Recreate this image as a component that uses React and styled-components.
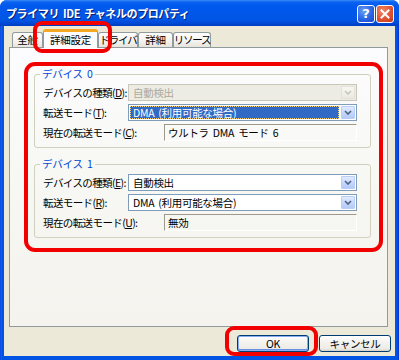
import React from 'react';
import styled, { createGlobalStyle } from 'styled-components';

const FONT = `"Noto Sans CJK JP", "Noto Sans", sans-serif`;

const Global = createGlobalStyle`
  html, body { margin: 0; padding: 0; background: #fff; }
  body { font-family: ${FONT}; }
  * { box-sizing: border-box; }
`;

const Window = styled.div`
  position: relative;
  width: 399px;
  height: 360px;
  display: flex;
  flex-direction: column;
  background: linear-gradient(to right, #0831d9 0, #166aee 1px, #0054e3 2px, #0054e3 397px, #0831d9 399px);
  border-radius: 7px 7px 0 0;
`;

const TitleBar = styled.div`
  height: 26px;
  flex: none;
  display: flex;
  align-items: center;
  justify-content: space-between;
  padding: 0 5px 0 6px;
  border-radius: 7px 7px 0 0;
  background: linear-gradient(to bottom, #3b8cf5 0, #0a63f0 2px, #0058ee 6px, #0157e8 14px, #0055e5 20px, #0046d0 24px, #003bc0 26px);
`;

const Title = styled.div`
  color: #fff;
  font-family: ${FONT};
  font-weight: bold;
  font-size: 11px;
  letter-spacing: -0.4px;
  word-spacing: 2px;
  text-shadow: 1px 1px 0 #0a1e78;
  white-space: nowrap;
`;

const CaptionButtons = styled.div`
  display: flex;
  gap: 1px;
  padding-top: 1px;
`;

const CaptionButton = styled.div`
  width: 18px;
  height: 18px;
  border: 1px solid #fff;
  border-radius: 3px;
  display: flex;
  align-items: center;
  justify-content: center;
  color: #fff;
  font-family: "DejaVu Sans", sans-serif;
  font-weight: bold;
  font-size: 13px;
  background: ${(p) =>
    p.$kind === 'close'
      ? 'radial-gradient(circle at 35% 30%, #f0886a 0, #e0532f 55%, #c2391a 100%)'
      : 'radial-gradient(circle at 35% 30%, #6a9cf5 0, #2a66e4 55%, #1848c8 100%)'};
`;

const Body = styled.div`
  flex: 1;
  margin: 0 4px 4px 4px;
  background: #ece9d8;
  display: flex;
  flex-direction: column;
  padding: 3px 4px 0 5px;
`;

const TabRow = styled.div`
  height: 18px;
  display: flex;
  align-items: flex-end;
  padding-left: 3px;
  position: relative;
  z-index: 1;
`;

const Tab = styled.div`
  width: ${(p) => p.$w}px;
  height: ${(p) => (p.$active ? 19 : 15)}px;
  margin-bottom: ${(p) => (p.$active ? -1 : 0)}px;
  border: 1px solid #919b9c;
  border-bottom: none;
  border-top: ${(p) => (p.$active ? '3px solid #f5a623' : '1px solid #919b9c')};
  border-radius: 3px 3px 0 0;
  background: ${(p) =>
    p.$active ? '#fcfcfe' : 'linear-gradient(to bottom, #fff 0, #f3f2ee 60%, #e6e4dc 100%)'};
  display: flex;
  align-items: ${(p) => (p.$active ? 'flex-start' : 'center')};
  justify-content: center;
  font-size: 10.5px;
  line-height: 12px;
  padding-top: ${(p) => (p.$active ? 2 : 0)}px;
  color: #000;
  white-space: nowrap;
  letter-spacing: ${(p) => (p.$tight ? -1.2 : -0.3)}px;
`;

const Panel = styled.div`
  height: 280px;
  margin-right: 3px;
  border: 1px solid #919b9c;
  background: linear-gradient(to bottom, #fcfcfe 0, #f7f7f3 50%, #f4f3ee 100%);
  padding: 20px 16px 0 24px;
  display: flex;
  flex-direction: column;
  gap: 10px;
`;

const Group = styled.fieldset`
  margin: 0;
  min-width: 0;
  border: 1px solid #d0d0bf;
  border-radius: 3px;
  padding: 4px 13px 6px 8px;
`;

const Legend = styled.legend`
  padding: 0 2px;
  margin-left: -3px;
  color: #0046d5;
  font-size: 10.5px;
  line-height: 12px;
  letter-spacing: -0.2px;
  word-spacing: 2px;
`;

const Row = styled.div`
  display: flex;
  align-items: center;
  height: 17px;
  margin-bottom: ${(p) => (p.$last ? 0 : 3)}px;
`;

const Label = styled.div`
  width: ${(p) => p.$w}px;
  flex: none;
  font-size: 10.5px;
  letter-spacing: -0.6px;
  color: #000;
  white-space: nowrap;
`;

const Combo = styled.div`
  flex: 1;
  height: 17px;
  display: flex;
  align-items: center;
  border: 1px solid ${(p) => (p.$disabled ? '#c9c7ba' : '#7f9db9')};
  background: ${(p) => (p.$disabled ? '#ecebe4' : '#fff')};
  padding: 1px;
`;

const ComboText = styled.div`
  flex: 1;
  height: 13px;
  display: flex;
  align-items: center;
  padding-left: 3px;
  margin-right: 2px;
  font-size: 10.5px;
  letter-spacing: -0.3px;
  word-spacing: 2px;
  white-space: nowrap;
  color: ${(p) => (p.$disabled ? '#aca899' : p.$selected ? '#fff' : '#000')};
  background: ${(p) => (p.$selected ? '#316ac5' : 'transparent')};
  outline: ${(p) => (p.$selected ? '1px dotted #f5d07a' : 'none')};
  outline-offset: -1px;
`;

const DropButton = styled.div`
  width: 14px;
  height: 13px;
  flex: none;
  border-radius: 1px;
  display: flex;
  align-items: center;
  justify-content: center;
  border: 1px solid ${(p) => (p.$disabled ? '#e3e1d8' : '#b8cdf7')};
  background: ${(p) =>
    p.$disabled
      ? 'linear-gradient(to bottom, #f7f6f2, #ebe9e1)'
      : 'linear-gradient(to bottom, #e2ebfe, #c2d5fb 60%, #b3c9f7)'};
`;

const StaticBox = styled.div`
  flex: 1;
  height: 17px;
  display: flex;
  align-items: center;
  padding-left: 3px;
  border: 1px solid;
  border-color: #9d9a8c #fff #fff #9d9a8c;
  font-size: 10.5px;
  letter-spacing: -0.3px;
  word-spacing: 2px;
  white-space: nowrap;
  color: #000;
`;

const ButtonRow = styled.div`
  display: flex;
  justify-content: flex-end;
  gap: 10px;
  margin-top: 8px;
`;

const PushButton = styled.div`
  width: 72px;
  height: 17px;
  display: flex;
  align-items: center;
  justify-content: center;
  border: 1px solid #003c74;
  border-radius: 3px;
  background: linear-gradient(to bottom, #fff 0, #f4f3ef 40%, #ecebe6 85%, #d6d0c5 100%);
  box-shadow: ${(p) => (p.$default ? 'inset 0 0 0 1px #89adf0, inset 0 -1px 0 1px #6c8fe6' : 'none')};
  font-size: 10.5px;
  letter-spacing: -0.3px;
  color: #000;
`;

const Mark = styled.div`
  position: absolute;
  left: ${(p) => p.$x}px;
  top: ${(p) => p.$y}px;
  width: ${(p) => p.$w}px;
  height: ${(p) => p.$h}px;
  border: 4px solid #f20000;
  border-radius: ${(p) => p.$r}px;
  pointer-events: none;
  z-index: 5;
`;

const U = styled.span`
  text-decoration: underline;
`;

const Chevron = ({ disabled }) => (
  <svg width="8" height="5" viewBox="0 0 8 5">
    <path d="M1 1 L4 4 L7 1" fill="none" stroke={disabled ? '#c9c7ba' : '#4d6185'} strokeWidth="1.6" />
  </svg>
);

const CloseX = () => (
  <svg width="10" height="10" viewBox="0 0 10 10">
    <path d="M1.5 1.5 L8.5 8.5 M8.5 1.5 L1.5 8.5" stroke="#fff" strokeWidth="2" strokeLinecap="square" />
  </svg>
);

const DropDown = ({ children, disabled, selected }) => (
  <Combo $disabled={disabled}>
    <ComboText $disabled={disabled} $selected={selected}>{children}</ComboText>
    <DropButton $disabled={disabled}>
      <Chevron disabled={disabled} />
    </DropButton>
  </Combo>
);

export default function App() {
  return (
    <>
      <Global />
      <Window>
        <TitleBar>
          <Title>プライマリ IDE チャネルのプロパティ</Title>
          <CaptionButtons>
            <CaptionButton $kind="help">?</CaptionButton>
            <CaptionButton $kind="close"><CloseX /></CaptionButton>
          </CaptionButtons>
        </TitleBar>
        <Body>
          <TabRow>
            <Tab $w={31}>全般</Tab>
            <Tab $w={55} $active>詳細設定</Tab>
            <Tab $w={40} $tight>ドライバ</Tab>
            <Tab $w={35}>詳細</Tab>
            <Tab $w={38} $tight>リソース</Tab>
          </TabRow>
          <Panel>
            <Group>
              <Legend>デバイス 0</Legend>
              <Row>
                <Label $w={85}>デバイスの種類(<U>D</U>):</Label>
                <DropDown disabled>自動検出</DropDown>
              </Row>
              <Row>
                <Label $w={85}>転送モード(<U>T</U>):</Label>
                <DropDown selected>DMA (利用可能な場合)</DropDown>
              </Row>
              <Row $last>
                <Label $w={121}>現在の転送モード(<U>C</U>):</Label>
                <StaticBox>ウルトラ DMA モード 6</StaticBox>
              </Row>
            </Group>
            <Group>
              <Legend>デバイス 1</Legend>
              <Row>
                <Label $w={85}>デバイスの種類(<U>E</U>):</Label>
                <DropDown>自動検出</DropDown>
              </Row>
              <Row>
                <Label $w={85}>転送モード(<U>R</U>):</Label>
                <DropDown>DMA (利用可能な場合)</DropDown>
              </Row>
              <Row $last>
                <Label $w={121}>現在の転送モード(<U>U</U>):</Label>
                <StaticBox>無効</StaticBox>
              </Row>
            </Group>
          </Panel>
          <ButtonRow>
            <PushButton $default>OK</PushButton>
            <PushButton>キャンセル</PushButton>
          </ButtonRow>
        </Body>
        <Mark $x={33} $y={21} $w={79} $h={32} $r={9} />
        <Mark $x={24} $y={62} $w={359} $h={190} $r={11} />
        <Mark $x={225} $y={326} $w={93} $h={30} $r={9} />
      </Window>
    </>
  );
}
